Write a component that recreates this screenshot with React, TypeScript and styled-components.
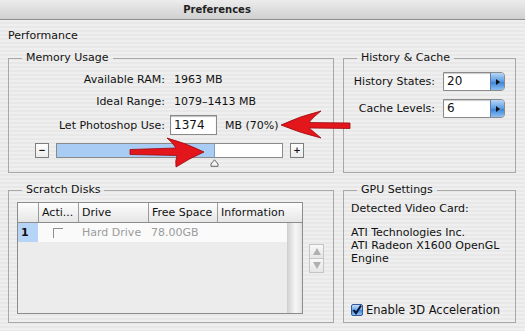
import React from 'react'
import styled, { createGlobalStyle } from 'styled-components'

const GlobalStyle = createGlobalStyle`
  html, body {
    margin: 0;
    padding: 0;
  }
  body {
    font-family: "DejaVu Sans", "Liberation Sans", sans-serif;
    font-size: 11px;
    color: #111;
  }
`

const Window = styled.div`
  position: relative;
  width: 525px;
  height: 331px;
  overflow: hidden;
  background: repeating-linear-gradient(to bottom, #efefef 0 2px, #e8e8e8 2px 4px);
`

const TitleBar = styled.div`
  height: 19px;
  border-bottom: 1px solid #8e8e8e;
  background: linear-gradient(#ececec, #d0d0d0);
  display: flex;
  align-items: center;
  justify-content: center;
  padding-right: 91px;
  font-size: 10px;
  font-weight: bold;
  color: #222;
`

const Body = styled.div`
  padding: 9px 0 0 8px;
`

const Heading = styled.div`
  height: 14px;
  line-height: 14px;
`

const Panels = styled.div`
  margin-top: 8px;
  display: grid;
  grid-template-columns: 326px 173px;
  grid-template-rows: 122px 140px;
  column-gap: 9px;
  row-gap: 10px;
`

const Group = styled.fieldset`
  margin: 0;
  padding: 0;
  min-width: 0;
  box-sizing: border-box;
  height: 100%;
  border: 1px solid #a8a8a8;
  display: flex;
  flex-direction: column;
`

const Legend = styled.legend`
  margin-left: 13px;
  padding: 0 4px;
  line-height: 14px;
`

/* memory usage */

const InfoGrid = styled.div`
  display: grid;
  grid-template-columns: 156px auto;
  grid-template-rows: 16px 16px 20px;
  column-gap: 5px;
  row-gap: 6px;
  align-items: center;
  padding-top: 6px;
`

const Label = styled.div`
  text-align: right;
  white-space: nowrap;
`

const Value = styled.div<{ $pad?: boolean }>`
  padding-left: ${p => (p.$pad ? '4px' : '0')};
  display: flex;
  align-items: center;
  gap: 8px;
  white-space: nowrap;
`

const TextBox = styled.div<{ $w: number }>`
  box-sizing: border-box;
  width: ${p => p.$w}px;
  height: 20px;
  padding-left: 3px;
  background: #fff;
  border: 1px solid #8a8a8a;
  box-shadow: inset 0 1px 1px rgba(0, 0, 0, 0.25);
  font-size: 12px;
  line-height: 18px;
`

const SliderRow = styled.div`
  margin-top: 8px;
  padding-left: 26px;
  display: flex;
  gap: 7px;
`

const SmallButton = styled.div`
  box-sizing: border-box;
  width: 14px;
  height: 15px;
  border: 1px solid #7d7d7d;
  background: linear-gradient(#ffffff, #ececec);
  display: flex;
  align-items: center;
  justify-content: center;
  font-size: 9px;
  font-weight: bold;
  line-height: 1;
`

const Track = styled.div`
  position: relative;
  box-sizing: border-box;
  width: 227px;
  height: 15px;
  border: 1px solid #8a8a8a;
  background: #fff;
`

const TrackFill = styled.div`
  height: 100%;
  background: #a9ccf4;
  border-right: 1px solid #7f9fc8;
  box-sizing: border-box;
`

const Thumb = styled.svg`
  position: absolute;
  top: 15px;
  width: 9px;
  height: 8px;
`

/* history */

const FieldGrid = styled.div`
  display: grid;
  grid-template-columns: 91px auto;
  grid-template-rows: 19px 19px;
  column-gap: 8px;
  row-gap: 8px;
  align-items: center;
  padding-top: 7px;
`

const Stepper = styled.div`
  display: flex;
  box-sizing: border-box;
  width: 62px;
  height: 19px;
  border: 1px solid #8a8a8a;
  border-radius: 0 4px 4px 0;
  background: #fff;
  box-shadow: inset 0 1px 1px rgba(0, 0, 0, 0.2);
`

const StepperText = styled.div`
  flex: 1;
  padding-left: 3px;
  font-size: 12px;
  line-height: 17px;
`

const StepperButton = styled.div`
  width: 13px;
  border-left: 1px solid #5d7fae;
  border-radius: 0 3px 3px 0;
  background: linear-gradient(#b7d6f6, #5b9be2 50%, #3f84d6 55%, #8cc0f1);
  display: flex;
  align-items: center;
  justify-content: center;
  &::after {
    content: '';
    border-left: 4px solid #111;
    border-top: 3px solid transparent;
    border-bottom: 3px solid transparent;
  }
`

/* scratch disks */

const DiskRow = styled.div`
  padding: 5px 0 0 8px;
  display: flex;
  align-items: center;
  gap: 6px;
`

const Table = styled.div`
  box-sizing: border-box;
  width: 286px;
  height: 112px;
  border: 1px solid #8c8c8c;
  background: #ececec;
  display: flex;
  flex-direction: column;
`

const HeaderRow = styled.div`
  display: grid;
  grid-template-columns: 20px 40px 70px 69px 1fr;
  height: 19px;
  border-bottom: 1px solid #8c8c8c;
  background: linear-gradient(#fdfdfd, #e6e6e6);
`

const HeadCell = styled.div`
  padding-left: 3px;
  line-height: 19px;
  white-space: nowrap;
  overflow: hidden;
  & + & {
    border-left: 1px solid #9c9c9c;
  }
`

const TableBody = styled.div`
  flex: 1;
  display: flex;
`

const Rows = styled.div`
  flex: 1;
`

const DataRow = styled.div`
  display: grid;
  grid-template-columns: 20px 41px 70px 69px 1fr;
  height: 19px;
  background: #fafafa;
  align-items: center;
`

const IndexCell = styled.div`
  height: 100%;
  padding-left: 3px;
  line-height: 19px;
  background: #b6d4f6;
  font-weight: bold;
`

const DimCell = styled.div<{ $pad: number }>`
  padding-left: ${p => p.$pad}px;
  color: #9c9c9c;
  white-space: nowrap;
`

const GhostBox = styled.div`
  margin-left: 15px;
  width: 9px;
  height: 9px;
  border-top: 1px solid #8e8e8e;
  border-left: 1px solid #8e8e8e;
`

const ScrollTrack = styled.div`
  width: 14px;
  background: linear-gradient(to right, #d4d4d4, #f6f6f6 55%, #e2e2e2);
  border-left: 1px solid #d0d0d0;
`

const Arrows = styled.div`
  display: flex;
  flex-direction: column;
`

const ArrowButton = styled.div<{ $up?: boolean }>`
  box-sizing: border-box;
  width: 15px;
  height: 15px;
  border: 1px solid #c4c4c4;
  margin-top: ${p => (p.$up ? '0' : '-1px')};
  background: linear-gradient(#f8f8f8, #e6e6e6);
  display: flex;
  align-items: center;
  justify-content: center;
  &::after {
    content: '';
    border-left: 4px solid transparent;
    border-right: 4px solid transparent;
    ${p => (p.$up ? 'border-bottom: 7px solid #b0b0b0;' : 'border-top: 7px solid #b0b0b0;')}
  }
`

/* gpu */

const GpuBody = styled.div`
  flex: 1;
  padding: 5px 0 5px 7px;
  display: flex;
  flex-direction: column;
`

const Line = styled.div`
  line-height: 14px;
`

const CardInfo = styled.div`
  margin-top: 10px;
  line-height: 13px;
`

const CheckRow = styled.label`
  margin-top: auto;
  display: flex;
  align-items: center;
  gap: 3px;
  line-height: 14px;
  font-size: 11.5px;
`

const AquaCheck = styled.span`
  box-sizing: border-box;
  width: 12px;
  height: 12px;
  border: 1px solid #34589a;
  border-radius: 2px;
  background: linear-gradient(#c3defa, #6aa7ea 50%, #3d88df 55%, #8ec3f3);
  display: flex;
  align-items: center;
  justify-content: center;
`

const Overlay = styled.svg`
  position: absolute;
  inset: 0;
  pointer-events: none;
`

const App = () => {
  const used = 70
  return (
    <Window>
      <GlobalStyle />
      <TitleBar>Preferences</TitleBar>
      <Body>
        <Heading>Performance</Heading>
        <Panels>
          <Group>
            <Legend>Memory Usage</Legend>
            <InfoGrid>
              <Label>Available RAM:</Label>
              <Value $pad>1963 MB</Value>
              <Label>Ideal Range:</Label>
              <Value $pad>1079–1413 MB</Value>
              <Label>Let Photoshop Use:</Label>
              <Value>
                <TextBox $w={47}>1374</TextBox>
                MB (70%)
              </Value>
            </InfoGrid>
            <SliderRow>
              <SmallButton>−</SmallButton>
              <Track>
                <TrackFill style={{ width: `${used}%` }} />
                <Thumb viewBox="0 0 9 8" style={{ left: `calc(${used}% - 5px)` }}>
                  <path d="M4.5 0.8 L8 5 L8 7.3 L1 7.3 L1 5 Z" fill="#f4f4f4" stroke="#666" strokeWidth="1" />
                </Thumb>
              </Track>
              <SmallButton>+</SmallButton>
            </SliderRow>
          </Group>

          <Group>
            <Legend>History &amp; Cache</Legend>
            <FieldGrid>
              <Label>History States:</Label>
              <Stepper>
                <StepperText>20</StepperText>
                <StepperButton />
              </Stepper>
              <Label>Cache Levels:</Label>
              <Stepper>
                <StepperText>6</StepperText>
                <StepperButton />
              </Stepper>
            </FieldGrid>
          </Group>

          <Group>
            <Legend>Scratch Disks</Legend>
            <DiskRow>
              <Table>
                <HeaderRow>
                  <HeadCell />
                  <HeadCell>Acti...</HeadCell>
                  <HeadCell>Drive</HeadCell>
                  <HeadCell>Free Space</HeadCell>
                  <HeadCell>Information</HeadCell>
                </HeaderRow>
                <TableBody>
                  <Rows>
                    <DataRow>
                      <IndexCell>1</IndexCell>
                      <GhostBox />
                      <DimCell $pad={3}>Hard Drive</DimCell>
                      <DimCell $pad={2}>78.00GB</DimCell>
                      <div />
                    </DataRow>
                  </Rows>
                  <ScrollTrack />
                </TableBody>
              </Table>
              <Arrows>
                <ArrowButton $up />
                <ArrowButton />
              </Arrows>
            </DiskRow>
          </Group>

          <Group>
            <Legend>GPU Settings</Legend>
            <GpuBody>
              <Line>Detected Video Card:</Line>
              <CardInfo>
                ATI Technologies Inc.
                <br />
                ATI Radeon X1600 OpenGL
                <br />
                Engine
              </CardInfo>
              <CheckRow>
                <AquaCheck>
                  <svg width="10" height="10" viewBox="0 0 10 10">
                    <path d="M1.5 5 L4 8.2 L9 0.5" fill="none" stroke="#0b1530" strokeWidth="2" />
                  </svg>
                </AquaCheck>
                Enable 3D Acceleration
              </CheckRow>
            </GpuBody>
          </Group>
        </Panels>
      </Body>

      <Overlay width="525" height="331" viewBox="0 0 525 331">
        <path
          d="M281 125 Q300 116 321 111 Q313 117 309 122.5 L350 123 L350 128.5 L309 128 Q314 132 321 138 Q300 133 281 125 Z"
          fill="#e3161c"
          stroke="#9b0a0e"
          strokeWidth="0.8"
        />
        <path
          d="M204 152 Q186 143 167 138 Q173 143 176 148 L130 149.5 L130 154.5 L177 155.5 Q175 161 176 167 Q190 158 204 152 Z"
          fill="#e3161c"
          stroke="#9b0a0e"
          strokeWidth="0.8"
        />
      </Overlay>
    </Window>
  )
}

export default App
